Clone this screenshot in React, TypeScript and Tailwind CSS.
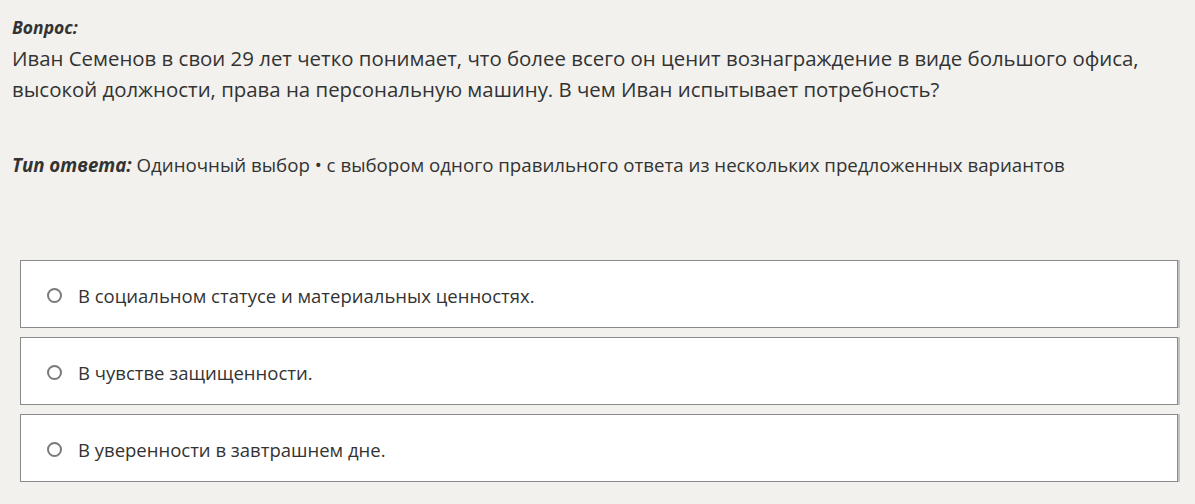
import React from "react";

const options = [
  "В социальном статусе и материальных ценностях.",
  "В чувстве защищенности.",
  "В уверенности в завтрашнем дне.",
];

export default function App() {
  return (
    <div
      className="w-[1195px] h-[504px] bg-[#f2f1ed] text-[#333333] overflow-hidden"
      style={{ fontFamily: '"Open Sans", "Noto Sans", sans-serif' }}
    >
      <div className="pl-[12px] pt-[15px]">
        <div className="text-[17.5px] leading-[24px] font-bold italic">Вопрос:</div>
        <div className="text-[20.4px] leading-[31px] mt-[4px]">
          Иван Семенов в свои 29 лет четко понимает, что более всего он ценит вознаграждение в виде большого офиса,
          <br />
          высокой должности, права на персональную машину. В чем Иван испытывает потребность?
        </div>
        <div className="mt-[47px] text-[18.7px] leading-[26px]">
          <span className="font-bold italic">Тип ответа:</span> Одиночный выбор • с выбором одного правильного ответа из нескольких предложенных вариантов
        </div>
      </div>
      <div className="mt-[82px] ml-[20px] w-[1158px] flex flex-col gap-[9px]">
        {options.map((o) => (
          <div
            key={o}
            className="h-[68px] bg-white border border-[#8a8a8a] shadow-[2px_0_0_#c4c4c4] flex items-center pl-[26px] pt-[3px] gap-[16px]"
          >
            <span className="w-[15px] h-[15px] rounded-full border-2 border-[#7a7a7a] shrink-0" />
            <span className="text-[18.5px] leading-[24px]">{o}</span>
          </div>
        ))}
      </div>
    </div>
  );
}
